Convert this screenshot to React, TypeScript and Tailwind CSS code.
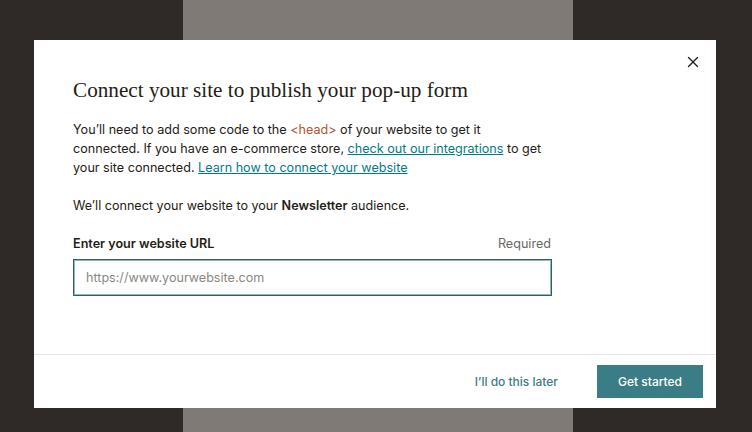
import { X } from "lucide-react"

const sans = { fontFamily: 'Inter, "Liberation Sans", Arial, sans-serif' }

export default function App() {
  return (
    <div className="relative h-[432px] w-[752px] overflow-hidden bg-[#2f2927]" style={sans}>
      {/* page behind the dialog */}
      <div className="ml-[183px] h-full w-[390px] bg-[#7f7a75]" />

      {/* dialog */}
      <div className="absolute left-[34px] top-[40px] flex h-[368px] w-[682px] flex-col bg-white">
        <button
          type="button"
          className="absolute right-[14px] top-[13px] flex h-[18px] w-[18px] items-center justify-center text-[#241c15]"
        >
          <X className="h-[20px] w-[20px]" strokeWidth={1.8} />
        </button>

        <div className="flex-1 pl-[39px] pt-[36px]">
          <h2
            className="text-[21.2px] leading-[28px] text-[#241c15]"
            style={{ fontFamily: '"Liberation Serif", "Times New Roman", serif' }}
          >
            Connect your site to publish your pop-up form
          </h2>

          <div className="mt-[16px] w-[478px] text-[12.6px] leading-[19px] text-[#241c15]">
            <p className="whitespace-nowrap">
              You’ll need to add some code to the <span className="text-[#b5532e]">&lt;head&gt;</span> of your
              website to get it
              <br />
              connected. If you have an e-commerce store,{" "}
              <a href="#" className="text-[#007c89] underline">
                check out our integrations
              </a>{" "}
              to get
              <br />
              your site connected.{" "}
              <a href="#" className="text-[#007c89] underline">
                Learn how to connect your website
              </a>
            </p>

            <p className="mt-[19px]">
              We’ll connect your website to your <span className="font-semibold">Newsletter</span> audience.
            </p>

            <div className="mt-[19px] flex items-center justify-between">
              <label className="font-semibold">Enter your website URL</label>
              <span className="text-[#6b6864]">Required</span>
            </div>

            <input
              type="text"
              placeholder="https://www.yourwebsite.com"
              className="mt-[6px] h-[37px] w-[479px] border border-[#3d5a5e] px-[12px] text-[12.6px] text-[#241c15] shadow-[inset_0_0_0_1px_#86bcc1] outline-none placeholder:text-[#8a8783]"
            />
          </div>
        </div>

        <div className="flex h-[54px] items-center justify-end gap-[19px] border-t border-[#e5e4e2] pr-[13px]">
          <button type="button" className="px-[20px] text-[12px] font-medium text-[#3d7d85]">
            I’ll do this later
          </button>
          <button
            type="button"
            className="h-[33px] w-[106px] bg-[#3b7d87] text-[12px] font-medium text-white"
          >
            Get started
          </button>
        </div>
      </div>
    </div>
  )
}
